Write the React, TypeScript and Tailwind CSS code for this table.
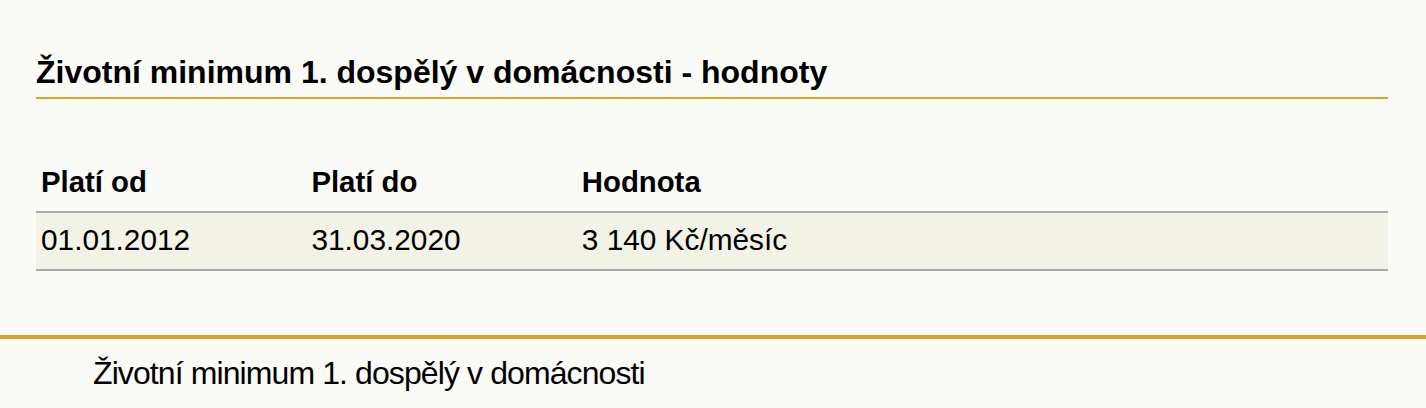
const rows = [{ from: '01.01.2012', to: '31.03.2020', value: '3 140 Kč/měsíc' }]

export default function App() {
  return (
    <div className="min-h-[408px] bg-[#fafaf6] text-black font-['Liberation_Sans',Arial,sans-serif]">
      <section className="pl-[36px] pr-[38px] pt-[54px]">
        <h1 className="text-[32px] leading-[37px] font-bold pb-[6px] border-b-2 border-[#daa520]">
          Životní minimum 1. dospělý v domácnosti - hodnoty
        </h1>

        <table className="w-full mt-[56px] border-collapse text-[29.33px] leading-[34px]">
          <thead>
            <tr>
              <th className="w-[20%] text-left font-bold pl-[5px] pt-[10px] pb-[12px]">Platí od</th>
              <th className="w-[20%] text-left font-bold pl-[5px] pt-[10px] pb-[12px]">Platí do</th>
              <th className="text-left font-bold pl-[5px] pt-[10px] pb-[12px]">Hodnota</th>
            </tr>
          </thead>
          <tbody>
            {rows.map((r) => (
              <tr key={r.from} className="bg-[#f2f2e6] border-y-2 border-[#aaaaaa] text-[29.8px]">
                <td className="pl-[5px] pt-[10px] pb-[12px]">{r.from}</td>
                <td className="pl-[5px] pt-[10px] pb-[12px]">{r.to}</td>
                <td className="pl-[5px] pt-[10px] pb-[12px]">{r.value}</td>
              </tr>
            ))}
          </tbody>
        </table>
      </section>

      <footer className="mt-[64px] border-t-4 border-[#daa520] pl-[93px] pt-[16px]">
        <p className="text-[32px] leading-[37px] tracking-[-0.9px]">Životní minimum 1. dospělý v domácnosti</p>
      </footer>
    </div>
  )
}
